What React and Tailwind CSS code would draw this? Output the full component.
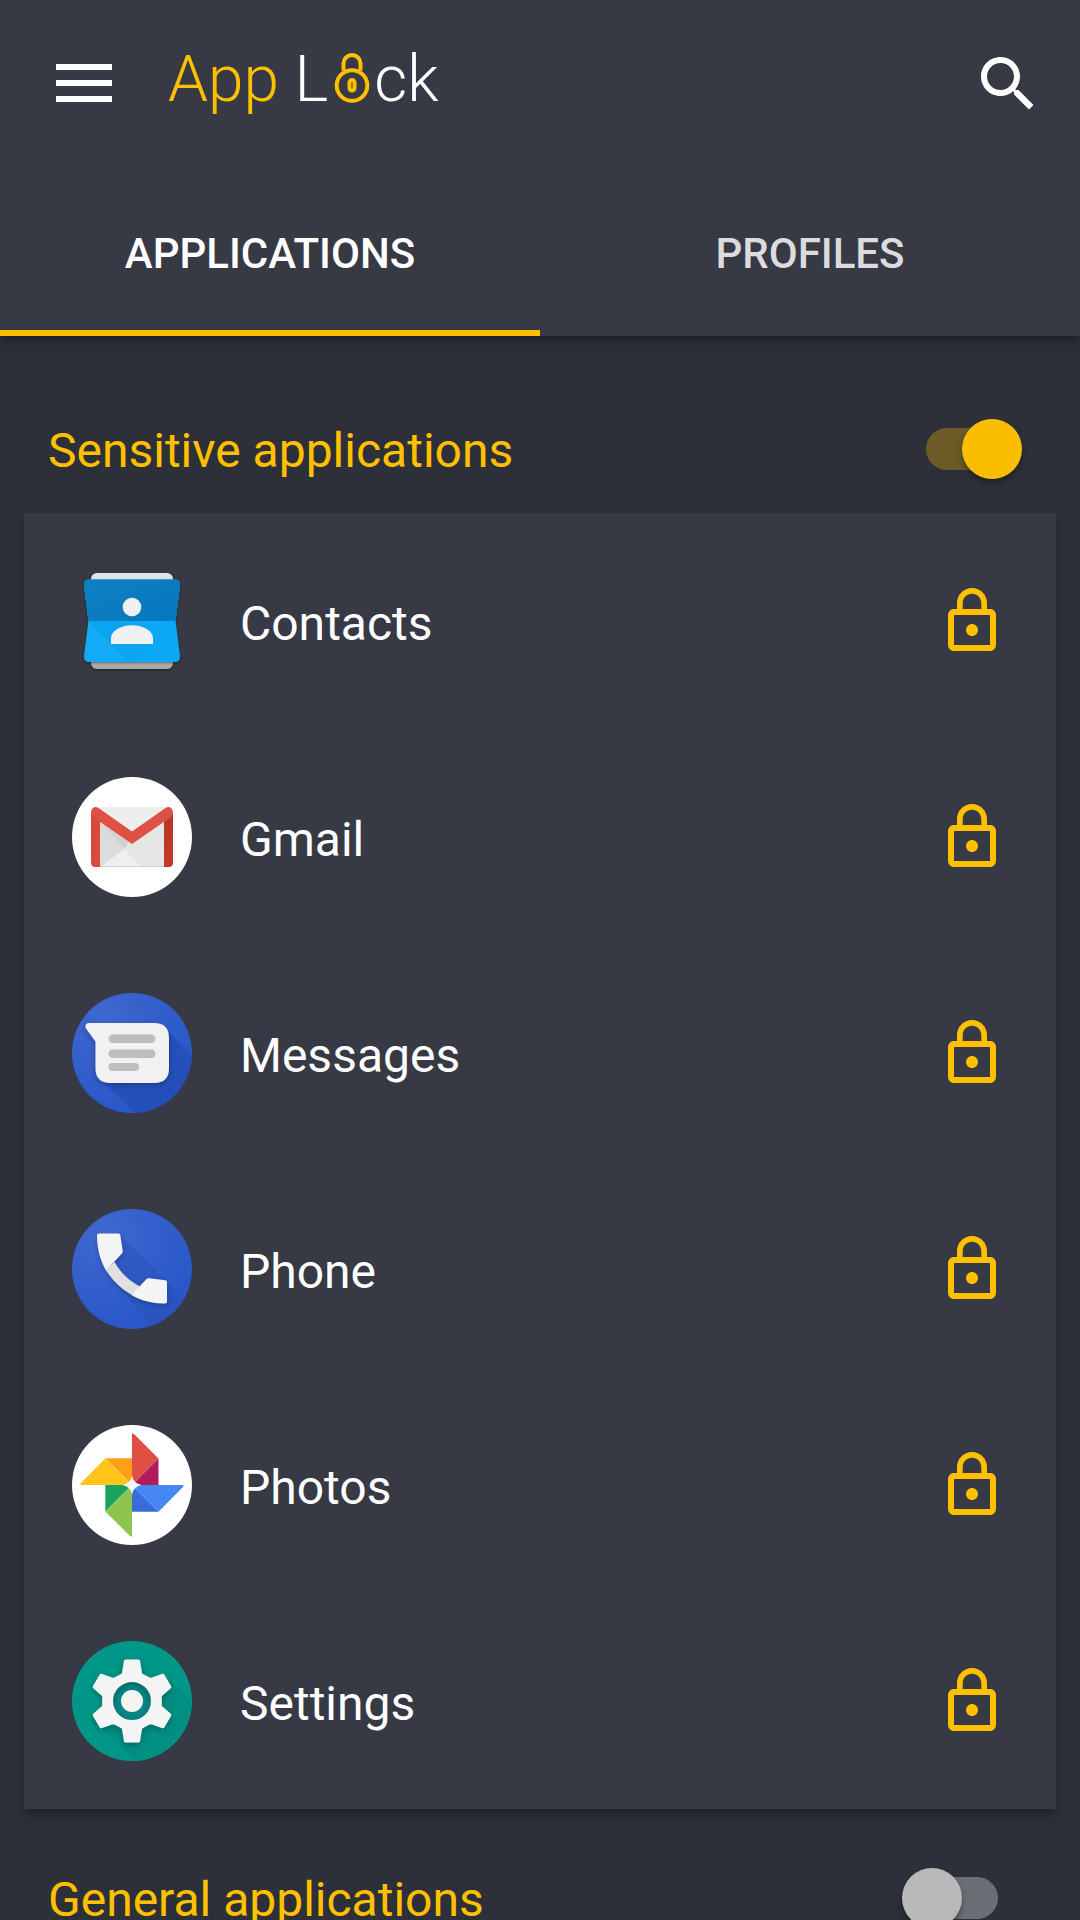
import React, { useState } from "react";

const ContactsIcon = () => (
  <svg viewBox="0 0 120 120" className="size-30 shrink-0" aria-hidden="true">
    <defs>
      <linearGradient id="contactsTop" x1="0" y1="0" x2="1" y2="1">
        <stop offset="0" stopColor="#0f80c2" />
        <stop offset="1" stopColor="#0577bf" />
      </linearGradient>
      <linearGradient id="contactsPaper" x1="0" y1="0" x2="0" y2="1">
        <stop offset="0" stopColor="#e6e6e6" />
        <stop offset="1" stopColor="#a8a8a8" />
      </linearGradient>
      <filter id="contactsShadow" x="-20%" y="-20%" width="140%" height="140%">
        <feDropShadow dx="0" dy="1" stdDeviation="1.2" floodOpacity="0.4" />
      </filter>
    </defs>
    <rect x="19" y="12" width="82" height="96" rx="6" fill="url(#contactsPaper)" filter="url(#contactsShadow)" />
    <path
      d="M17 18.500h86q5 0 5 6L103.500 60l4.500 35q0 6-5 6H17q-5 0-5-6l4.500-35L12 24.500q0-6 5-6z"
      fill="#08a8f5"
      filter="url(#contactsShadow)"
    />
    <path d="M17 18.500h86q5 0 5 6L103.500 60h-87L12 24.500q0-6 5-6z" fill="url(#contactsTop)" />
    <path d="M16.500 60L39 82.500 57.500 101H17q-5 0-5-6z" fill="#1fb2fa" opacity="0.35" />
    <path d="M16.500 60h30L81 83 57.500 101z" fill="#039be5" opacity="0.3" />
    <circle cx="60" cy="46" r="9.300" fill="#f0f0f0" />
    <path d="M39 83v-6c0-7 10-12.700 21-12.700S81 70 81 77v6z" fill="#f0f0f0" />
  </svg>
);

const GmailIcon = () => (
  <svg viewBox="0 0 120 120" className="size-30 shrink-0" aria-hidden="true">
    <defs>
      <linearGradient id="gmailRight" x1="0" y1="0" x2="0" y2="1">
        <stop offset="0" stopColor="#b8352a" />
        <stop offset="1" stopColor="#c5392b" />
      </linearGradient>
    </defs>
    <circle cx="60" cy="60" r="60" fill="#fff" />
    <path d="M23 30h74v60H23z" fill="#eeeeee" />
    <path d="M28 45l32 22 32-22v45H28z" fill="#e6e6e6" />
    <path d="M28 45v45l24.500-18z" fill="#dcdcdc" />
    <path d="M28 90l24.500-18L69 90z" fill="#efefef" />
    <path d="M28 45l24.500 27 4-7z" fill="#d2d2d2" />
    <path d="M28 89h64v1H28z" fill="#cfcfcf" />
    <path d="M19 36l9 5v49h-4.500q-4.500 0-4.500-4.500z" fill="#da493c" />
    <path d="M101 36l-9 5v49h4.500q4.500 0 4.500-4.500z" fill="url(#gmailRight)" />
    <path d="M19 38l9 7.500v-4z" fill="#b8352a" opacity="0.5" />
    <path
      d="M60 54.500L26.500 31q-4-2.200-6.500 1-2.500 4.500 1 8L60 67l39-27q3.500-3.500 1-8-2.500-3.200-6.500-1z"
      fill="#df5145"
    />
  </svg>
);

const MessagesIcon = () => (
  <svg viewBox="0 0 120 120" className="size-30 shrink-0" aria-hidden="true">
    <defs>
      <radialGradient id="blueDisc" cx="0.25" cy="0.2" r="0.9">
        <stop offset="0" stopColor="#3f68cf" />
        <stop offset="1" stopColor="#2856c8" />
      </radialGradient>
      <clipPath id="messagesClip">
        <circle cx="60" cy="60" r="60" />
      </clipPath>
      <filter id="messagesShadow" x="-20%" y="-20%" width="140%" height="150%">
        <feDropShadow dx="0" dy="2" stdDeviation="3" floodOpacity="0.3" />
      </filter>
    </defs>
    <circle cx="60" cy="60" r="60" fill="url(#blueDisc)" />
    <path d="M93 35l40 40v60H78L27 85z" fill="#2149b0" opacity="0.6" clipPath="url(#messagesClip)" />
    <path
      d="M16.500 30H82q15 0 15 15v30q0 15-15 15H38.500q-15 0-15-15V48.500L14 35.500q-2-4.500 2.500-5.500z"
      fill="#f1f1f1"
      filter="url(#messagesShadow)"
    />
    <g fill="#bdbdbd">
      <rect x="36.500" y="41.500" width="47" height="8.500" rx="4.250" />
      <rect x="36.500" y="56.500" width="47" height="8.500" rx="4.250" />
      <rect x="36.500" y="70" width="30.500" height="8" rx="4" />
    </g>
  </svg>
);

const PhoneIcon = () => (
  <svg viewBox="0 0 120 120" className="size-30 shrink-0" aria-hidden="true">
    <defs>
      <radialGradient id="phoneDisc" cx="0.25" cy="0.2" r="0.9">
        <stop offset="0" stopColor="#3f68cf" />
        <stop offset="1" stopColor="#2856c8" />
      </radialGradient>
      <clipPath id="phoneClip">
        <circle cx="60" cy="60" r="60" />
      </clipPath>
      <filter id="phoneShadow" x="-20%" y="-20%" width="140%" height="150%">
        <feDropShadow dx="0" dy="2" stdDeviation="2.5" floodOpacity="0.25" />
      </filter>
    </defs>
    <circle cx="60" cy="60" r="60" fill="url(#phoneDisc)" />
    <path d="M48 26l80 80-40 20L36 66z" fill="#2a50b8" opacity="0.5" clipPath="url(#phoneClip)" />
    <g filter="url(#phoneShadow)">
      <path d="M34 61c6 10 15 19 26 25l8-8.500c-11-6-19-13-25.500-24.500z" fill="#e0e0e0" />
      <path
        d="M27 24.500h19.500q1.500 0 1.800 1.500l2.400 16q.2 1.500-.8 2.500L34 61.500C28 51 25 39 25 26.500q0-2 2-2z"
        fill="#f4f4f4"
      />
      <path
        d="M59.500 86l15-16q1-1 2.500-.8l16.300 2q1.700.3 1.700 1.800v19.500q0 2-2 2C81 94.700 69.500 91.800 59.500 86z"
        fill="#f4f4f4"
      />
    </g>
  </svg>
);

const PhotosIcon = () => (
  <svg viewBox="0 0 120 120" className="size-30 shrink-0" aria-hidden="true">
    <circle cx="60" cy="60" r="60" fill="#fff" />
    <path d="M60 60V9q.8-1.200 2 0l24.500 24.500z" fill="#de4f43" />
    <path d="M60 60l26.500-26.500V60z" fill="#b01b5d" />
    <path d="M60 60V33.300H33.500z" fill="#ff9f16" />
    <path d="M60 60H9q-1.200-.8 0-2l24.500-24.700z" fill="#ffc51b" />
    <path d="M60 60h51q1.200.8 0 2L86.500 86.700z" fill="#4587f5" />
    <path d="M60 60v26.700h26.500z" fill="#3b6bd8" />
    <path d="M60 60H33.300v26.500z" fill="#1aa260" />
    <path d="M60 60v51q-.8 1.200-2 0L33.300 86.500z" fill="#8ec450" />
    <path d="M60 50.500q1.500 8 9.500 9.500-8 1.500-9.500 9.500-1.500-8-9.500-9.500 8-1.500 9.500-9.500z" fill="#f4f4f4" />
  </svg>
);

const SettingsIcon = () => (
  <svg viewBox="0 0 120 120" className="size-30 shrink-0" aria-hidden="true">
    <defs>
      <clipPath id="settingsClip">
        <circle cx="60" cy="60" r="60" />
      </clipPath>
      <filter id="settingsShadow" x="-20%" y="-20%" width="140%" height="150%">
        <feDropShadow dx="0" dy="2" stdDeviation="3" floodOpacity="0.3" />
      </filter>
    </defs>
    <circle cx="60" cy="60" r="60" fill="#009788" />
    <path d="M92 33l40 40v60H75L29 87z" fill="#018d80" opacity="0.8" clipPath="url(#settingsClip)" />
    <circle cx="60" cy="60" r="24" fill="#078585" />
    <path
      fillRule="evenodd"
      stroke="#f4f4f4"
      strokeWidth="3"
      strokeLinejoin="round"
      fill="#f4f4f4"
      d="M53.500 20h13l2 12q.5 2 2.300 2.700l5.700 3q2 1 4 .2l10.500-3.700 6.800 11.800-8.300 7.300q-1.500 1.500-1.200 3.300v6.800q-.3 1.800 1.200 3.300l8.300 7.300-6.800 11.800-10.500-3.700q-2-.8-4 .2l-5.700 3q-1.800.7-2.300 2.700l-2 12h-13l-2-12q-.5-2-2.300-2.700l-5.700-3q-2-1-4-.2L29 85.800 22.200 74l8.300-7.300q1.500-1.500 1.200-3.300v-6.800q.3-1.800-1.200-3.300L22.200 46 29 34.200l10.500 3.700q2 .8 4-.2l5.700-3q1.800-.7 2.300-2.700zM60 39.500a20.500 20.500 0 1 0 0 41 20.500 20.500 0 0 0 0-41z"
      filter="url(#settingsShadow)"
    />
    <circle cx="60" cy="60" r="11" fill="#f4f4f4" />
  </svg>
);

const sensitiveApps = [
  { name: "Contacts", Icon: ContactsIcon },
  { name: "Gmail", Icon: GmailIcon },
  { name: "Messages", Icon: MessagesIcon },
  { name: "Phone", Icon: PhoneIcon },
  { name: "Photos", Icon: PhotosIcon },
  { name: "Settings", Icon: SettingsIcon },
];

const Logo = () => (
  <h1 className="mb-2 ml-14 flex text-[64px] leading-18 font-light text-white">
    <span className="whitespace-pre text-[#ffc000]">App </span>
    <span>L</span>
    <svg viewBox="0 0 36 52" className="mt-2 mr-1 ml-1.5 h-13 w-9" fill="none" stroke="#ffc000" aria-hidden="true">
      <path d="M9.500 18.500V11.500a8.500 8.500 0 0 1 17 0v7" strokeWidth="4" />
      <circle cx="18" cy="33.500" r="15.300" strokeWidth="4" />
      <rect x="15.500" y="28" width="5" height="10.500" rx="2.500" strokeWidth="4" />
    </svg>
    <span>ck</span>
  </h1>
);

const SectionHeader = ({ id, title, checked, onChange }) => (
  <div className="flex items-center justify-between pt-[61px] pr-[70px] pb-8 pl-12">
    <label htmlFor={id} className="text-5xl leading-[60px] text-[#ffc000]">
      {title}
    </label>
    <input
      id={id}
      type="checkbox"
      role="switch"
      checked={checked}
      onChange={onChange}
      className="relative mr-3 mb-1 h-[42px] w-[84px] shrink-0 cursor-pointer appearance-none rounded-full bg-[#6c6e76] after:absolute after:-top-[9px] after:-left-3 after:size-15 after:rounded-full after:bg-[#b9b9b9] after:shadow-[0_4px_6px_rgba(0,0,0,0.35)] checked:mr-0 checked:bg-[#6c5b27] checked:after:-right-3 checked:after:left-auto checked:after:bg-[#fabd00]"
    />
  </div>
);

const AppRow = ({ name, Icon, locked, onToggle }) => (
  <li className="flex h-54 items-center px-12">
    <Icon />
    <span className="ml-12 flex-1 pt-1.5 text-5xl leading-[60px] text-white">{name}</span>
    <button type="button" onClick={onToggle} aria-pressed={locked} aria-label={`Lock ${name}`}>
      <svg viewBox="0 0 24 24" className="size-18" fill="#ffc000">
        <path d="M12 17c1.100 0 2-.9 2-2s-.9-2-2-2-2 .9-2 2 .9 2 2 2z" />
        <path
          fillRule="evenodd"
          d={
            locked
              ? "M18 8h-1V6c0-2.760-2.240-5-5-5S7 3.240 7 6v2H6c-1.100 0-2 .9-2 2v10c0 1.100.9 2 2 2h12c1.100 0 2-.9 2-2V10c0-1.100-.9-2-2-2zM8.900 6c0-1.710 1.390-3.100 3.100-3.100s3.100 1.390 3.100 3.100v2H8.900V6zM18 20H6V10h12v10z"
              : "M18 8H8.900V6c0-1.710 1.390-3.100 3.100-3.100s3.100 1.390 3.100 3.100H17c0-2.760-2.240-5-5-5S7 3.240 7 6v2H6c-1.100 0-2 .9-2 2v10c0 1.100.9 2 2 2h12c1.100 0 2-.9 2-2V10c0-1.100-.9-2-2-2zM18 20H6V10h12v10z"
          }
        />
      </svg>
    </button>
  </li>
);

const App = () => {
  const [tab, setTab] = useState("applications");
  const [sensitive, setSensitive] = useState(true);
  const [general, setGeneral] = useState(false);
  const [unlocked, setUnlocked] = useState([]);

  const toggleLock = (name) => {
    setUnlocked(
      unlocked.includes(name) ? unlocked.filter((n) => n !== name) : [...unlocked, name]
    );
  };

  const tabClass = (name) =>
    tab === name
      ? "flex-1 border-b-6 border-[#ffc000] pt-2.5 text-white"
      : "flex-1 border-b-6 border-transparent pt-2.5 text-[#dcdcdc]";

  return (
    <div className="flex h-screen flex-col bg-[#2d3038] font-['Roboto',sans-serif]">
      <header className="relative z-10 bg-[#373944] shadow-[0_4px_10px_rgba(0,0,0,0.4)]">
        <div className="flex h-42 items-center pr-9 pl-14">
          <button type="button" aria-label="Menu" className="mb-0.5">
            <svg viewBox="0 0 56 38" className="h-[38px] w-14" fill="#fff">
              <path d="M0 0h56v6H0zM0 16h56v6H0zM0 32h56v6H0z" />
            </svg>
          </button>
          <Logo />
          <button type="button" aria-label="Search" className="ml-auto">
            <svg viewBox="0 0 24 24" className="size-18" fill="#fff">
              <path d="M15.500 14h-.79l-.28-.27C15.410 12.590 16 11.110 16 9.500 16 5.910 13.090 3 9.500 3S3 5.910 3 9.500 5.910 16 9.500 16c1.610 0 3.090-.59 4.230-1.570l.27.28v.79l5 4.990L20.490 19l-4.990-5zm-6 0C7.010 14 5 11.990 5 9.500S7.010 5 9.500 5 14 7.010 14 9.500 11.990 14 9.500 14z" />
            </svg>
          </button>
        </div>
        <nav className="flex h-42 text-[42px] leading-12 font-medium">
          <button type="button" onClick={() => setTab("applications")} className={tabClass("applications")}>
            APPLICATIONS
          </button>
          <button type="button" onClick={() => setTab("profiles")} className={tabClass("profiles")}>
            PROFILES
          </button>
        </nav>
      </header>
      <main className="flex-1 overflow-y-auto pt-6 [scrollbar-width:none]">
        <SectionHeader
          id="sensitive"
          title="Sensitive applications"
          checked={sensitive}
          onChange={(e) => setSensitive(e.target.checked)}
        />
        <ul className="mx-6 bg-[#373944] shadow-[0_5px_8px_rgba(0,0,0,0.3)]">
          {sensitiveApps.map(({ name, Icon }) => (
            <AppRow
              key={name}
              name={name}
              Icon={Icon}
              locked={!unlocked.includes(name)}
              onToggle={() => toggleLock(name)}
            />
          ))}
        </ul>
        <SectionHeader
          id="general"
          title="General applications"
          checked={general}
          onChange={(e) => setGeneral(e.target.checked)}
        />
      </main>
    </div>
  );
};

export default App;
